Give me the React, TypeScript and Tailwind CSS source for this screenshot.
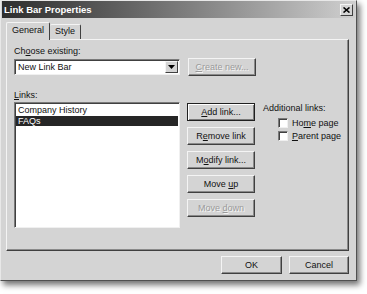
import React from "react";

const font = { fontFamily: '"Liberation Sans", Arial, sans-serif' };

function Btn({ children, disabled, def, className = "" }: { children: React.ReactNode; disabled?: boolean; def?: boolean; className?: string }) {
  return (
    <div
      className={
        "flex items-center justify-center h-[18px] text-[9px] leading-none whitespace-nowrap border " +
        (def
          ? "border-[#202020] shadow-[inset_1px_1px_0_#ffffff,inset_-1px_-1px_0_#7a7a7a] "
          : "border-t-[#f4f4f4] border-l-[#f4f4f4] border-r-[#404040] border-b-[#404040] shadow-[inset_-1px_-1px_0_#8a8a8a] ") +
        (disabled ? "text-[#9a9a9a] [text-shadow:1px_1px_0_#f4f4f4] " : "text-[#111] ") +
        className
      }
    >
      {children}
    </div>
  );
}

function Check({ children }: { children: React.ReactNode }) {
  return (
    <div className="flex items-center gap-[4px] text-[9px] leading-none text-[#111] whitespace-nowrap h-[12px]">
      <div className="w-[10px] h-[10px] bg-white border border-t-[#7a7a7a] border-l-[#7a7a7a] border-r-[#f0f0f0] border-b-[#f0f0f0] shadow-[inset_1px_1px_0_#404040]" />
      <span>{children}</span>
    </div>
  );
}

export default function App() {
  return (
    <div className="w-[367px] h-[294px] bg-white overflow-hidden" style={font}>
      <div className="w-[357px] h-[281px] bg-[#d4d4d4] flex flex-col border border-t-[#e8e8e8] border-l-[#e8e8e8] border-r-[#505050] border-b-[#505050] shadow-[3px_4px_6px_rgba(0,0,0,0.55)]">
        {/* title bar */}
        <div className="h-[17px] mx-[1px] flex items-center justify-between bg-gradient-to-r from-[#2e2e2e] via-[#7a7a7a] to-[#cfcfcf] pl-[2px] pr-[2px]">
          <span className="text-white font-bold text-[9.5px] leading-none">Link Bar Properties</span>
          <div className="w-[13px] h-[12px] bg-[#d4d4d4] border border-t-[#f4f4f4] border-l-[#f4f4f4] border-r-[#404040] border-b-[#404040] flex items-center justify-center">
            <svg width="7" height="6" viewBox="0 0 7 6">
              <path d="M0.5 0.5 L6.5 5.5 M6.5 0.5 L0.5 5.5" stroke="#000" strokeWidth="1.6" />
            </svg>
          </div>
        </div>

        {/* tabs */}
        <div className="flex items-end ml-[5px] mt-[3px] h-[18px] relative z-10">
          <div className="h-[18px] px-[5px] flex items-center text-[9px] text-[#111] bg-[#d4d4d4] border-t border-l border-r border-t-[#f4f4f4] border-l-[#f4f4f4] border-r-[#404040] rounded-t-[2px] mb-[-1px] pb-[1px]">
            General
          </div>
          <div className="h-[15px] px-[5px] flex items-center text-[9px] text-[#111] border-t border-r border-t-[#f4f4f4] border-r-[#404040] rounded-t-[2px]">
            Style
          </div>
        </div>

        {/* panel */}
        <div className="ml-[5px] w-[343px] h-[212px] border border-t-[#f4f4f4] border-l-[#f4f4f4] border-r-[#404040] border-b-[#404040] shadow-[inset_-1px_-1px_0_#8a8a8a] px-[7px] pt-[7px] text-[#111]">
          <div className="text-[9px] leading-none">
            Ch<span className="underline">o</span>ose existing:
          </div>
          <div className="flex items-start mt-[2px] gap-[8px]">
            <div className="mt-[1px] w-[166px] h-[16px] bg-white border border-t-[#7a7a7a] border-l-[#7a7a7a] border-r-[#f0f0f0] border-b-[#f0f0f0] shadow-[inset_1px_1px_0_#404040] flex items-center justify-between pl-[3px] pr-[1px]">
              <span className="text-[9px] leading-none">New Link Bar</span>
              <div className="w-[13px] h-[12px] bg-[#d4d4d4] border border-t-[#f4f4f4] border-l-[#f4f4f4] border-r-[#404040] border-b-[#404040] flex items-center justify-center">
                <svg width="7" height="4" viewBox="0 0 7 4">
                  <path d="M0 0 H7 L3.5 4 Z" fill="#000" />
                </svg>
              </div>
            </div>
            <Btn disabled className="w-[68px]">
              <span><span className="underline">C</span>reate new...</span>
            </Btn>
          </div>

          <div className="text-[9px] leading-none mt-[15px]">
            <span className="underline">L</span>inks:
          </div>

          <div className="flex mt-[2px]">
            <div className="w-[167px] h-[126px] bg-white border border-t-[#7a7a7a] border-l-[#7a7a7a] border-r-[#f0f0f0] border-b-[#f0f0f0] shadow-[inset_1px_1px_0_#404040] pt-[2px] pl-[1px] pr-[1px]">
              <div className="h-[11px] text-[9px] leading-none flex items-center pl-[2px]">Company History</div>
              <div className="h-[10px] text-[9px] leading-none flex items-center pl-[2px] bg-[#262626] text-white">FAQs</div>
            </div>

            <div className="flex flex-col gap-[6px] ml-[7px] mt-[1px] w-[68px]">
              <Btn def>
                <span><span className="underline">A</span>dd link...</span>
              </Btn>
              <Btn>
                <span>R<span className="underline">e</span>move link</span>
              </Btn>
              <Btn>
                <span>M<span className="underline">o</span>dify link...</span>
              </Btn>
              <Btn>
                <span>Move <span className="underline">u</span>p</span>
              </Btn>
              <Btn disabled>
                <span>Move <span className="underline">d</span>own</span>
              </Btn>
            </div>

            <div className="flex flex-col ml-[8px] pt-[2px]">
              <div className="text-[9px] leading-none whitespace-nowrap">Additional links:</div>
              <div className="flex flex-col gap-[1px] ml-[15px] mt-[4px]">
                <Check>
                  Ho<span className="underline">m</span>e page
                </Check>
                <Check>
                  <span className="underline">P</span>arent page
                </Check>
              </div>
            </div>
          </div>
        </div>

        {/* footer */}
        <div className="flex justify-end gap-[7px] mt-[5px] mr-[7px]">
          <Btn className="w-[61px]">OK</Btn>
          <Btn className="w-[60px]">Cancel</Btn>
        </div>
      </div>
    </div>
  );
}
